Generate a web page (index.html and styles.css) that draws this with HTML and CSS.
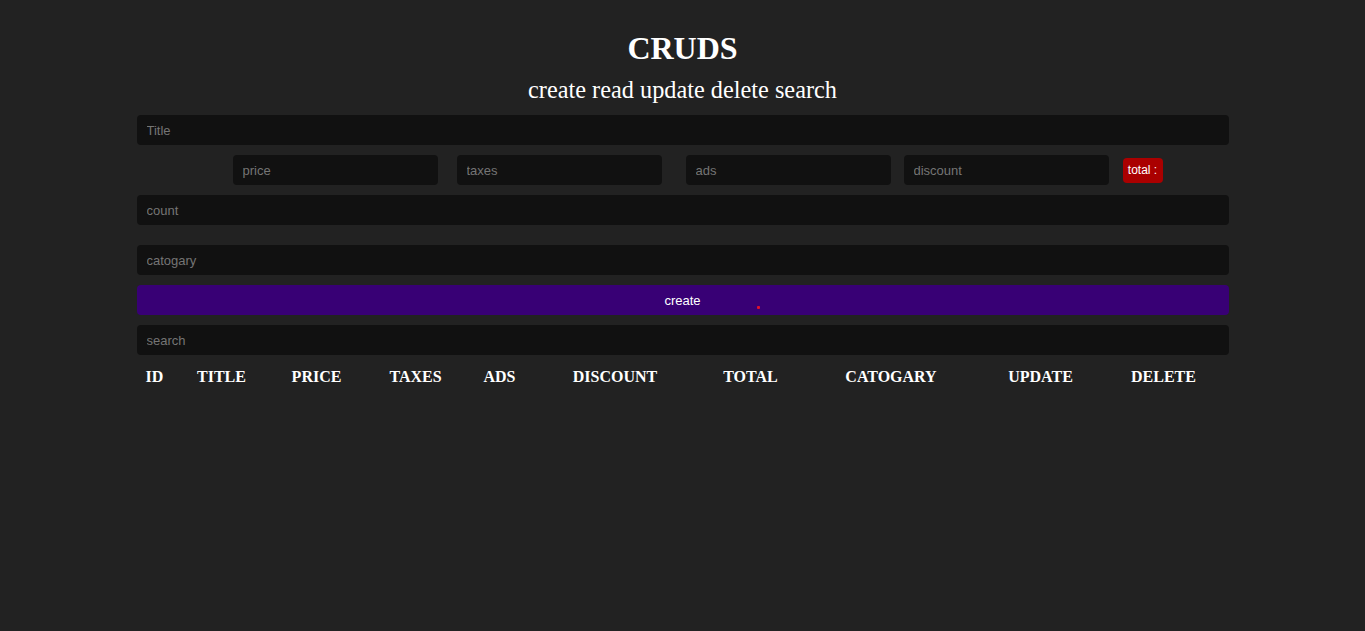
FILE: index.html
```html
<!DOCTYPE html>
<html lang="en">
<head>
<meta charset="UTF-8">
<title>CRUDS</title>
<link rel="stylesheet" href="styles.css">
</head>
<body>
<div class="crud">
  <div class="head">
    <h1 class="title">CRUDS</h1>
    <p class="subtitle">create read update delete search</p>
  </div>
  <div class="inputs">
    <input class="field" type="text" placeholder="Title">
    <div class="price-row">
      <input class="field small" type="text" placeholder="price">
      <input class="field small g19" type="number" placeholder="taxes">
      <input class="field small g24" type="number" placeholder="ads">
      <input class="field small g13" type="number" placeholder="discount">
      <small class="total">total :</small>
    </div>
    <input class="field count" type="number" placeholder="count">
    <input class="field" type="text" placeholder="catogary">
    <div class="btn-wrap">
      <button class="create">create</button>
      <span class="dot"></span>
    </div>
  </div>
  <div class="search-box">
    <input class="field" type="text" placeholder="search">
  </div>
  <table class="output">
    <thead>
      <tr>
        <th>ID</th>
        <th>TITLE</th>
        <th>PRICE</th>
        <th>TAXES</th>
        <th>ADS</th>
        <th>DISCOUNT</th>
        <th>TOTAL</th>
        <th>CATOGARY</th>
        <th>UPDATE</th>
        <th>DELETE</th>
      </tr>
    </thead>
    <tbody></tbody>
  </table>
</div>
</body>
</html>
```
FILE: styles.css
```css
* { box-sizing: border-box; }
body {
  margin: 0;
  background: #222222;
  color: #ffffff;
  font-family: "Liberation Serif", "Times New Roman", serif;
}
.crud {
  width: 80%;
  margin: 0 auto;
}
.head {
  text-align: center;
}
.title {
  margin: 30px 0 0;
  font-size: 32px;
  line-height: 37px;
  font-weight: bold;
}
.subtitle {
  margin: 9px 0 0;
  font-size: 24.3px;
  line-height: 28px;
}
.inputs {
  margin-top: 11px;
  display: flex;
  flex-direction: column;
  gap: 10px;
}
.field {
  display: block;
  width: 100%;
  height: 30px;
  border: none;
  outline: none;
  border-radius: 4px;
  background: #111111;
  color: #ffffff;
  padding: 0 10px;
  font-family: "Liberation Sans", Arial, sans-serif;
  font-size: 13px;
}
.field::placeholder { color: #757575; }
.field::-webkit-outer-spin-button,
.field::-webkit-inner-spin-button { -webkit-appearance: none; margin: 0; }
.price-row {
  display: flex;
  align-items: center;
  padding-left: 96px;
}
.small {
  width: 205px;
  flex: none;
}
.g19 { margin-left: 19px; }
.g24 { margin-left: 24px; }
.g13 { margin-left: 13px; }
.total {
  margin-left: 14px;
  width: 40px;
  text-align: center;
  background: #aa0000;
  color: #ffffff;
  border-radius: 4px;
  height: 25px;
  line-height: 25px;
  padding: 0;
  font-family: "Liberation Sans", Arial, sans-serif;
  font-size: 12px;
}
.count { margin-bottom: 10px; }
.btn-wrap { position: relative; }
.create {
  display: block;
  width: 100%;
  height: 30px;
  border: none;
  border-radius: 4px;
  background: #380075;
  color: #ffffff;
  font-family: "Liberation Sans", Arial, sans-serif;
  font-size: 13px;
  padding: 0;
}
.dot {
  position: absolute;
  left: 620px;
  top: 21px;
  width: 3px;
  height: 3px;
  background: #e0102a;
  border-radius: 1px;
}
.search-box { margin-top: 10px; }
.output {
  width: 100%;
  margin-top: 9px;
  border-spacing: 2px;
  table-layout: fixed;
}
.output th {
  font-size: 16px;
  font-weight: bold;
  padding: 1px;
  line-height: 20px;
}
.output th:nth-child(1) { width: 32px; }
.output th:nth-child(2) { width: 98px; }
.output th:nth-child(3) { width: 88px; }
.output th:nth-child(4) { width: 106px; }
.output th:nth-child(5) { width: 58px; }
.output th:nth-child(6) { width: 169px; }
.output th:nth-child(7) { width: 98px; }
.output th:nth-child(8) { width: 179px; }
.output th:nth-child(9) { width: 116px; }
.output th:nth-child(10) { width: 126px; }
```
